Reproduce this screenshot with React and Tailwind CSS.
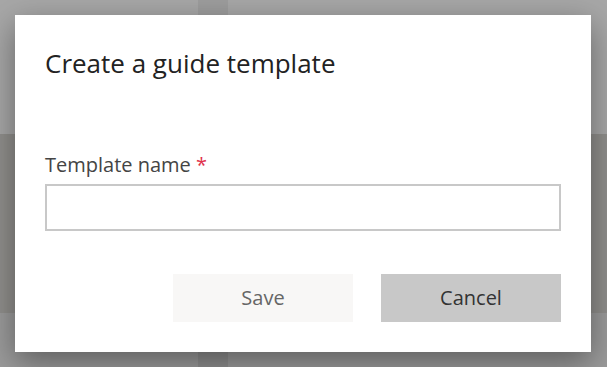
import React from 'react'

const App = () => {
  return (
    <div className="relative w-[607px] h-[367px] overflow-hidden bg-[#a7a7a7]" style={{ fontFamily: '"Open Sans", "Noto Sans", sans-serif' }}>
      {/* page behind the overlay */}
      <div className="absolute left-0 top-[134px] w-[607px] h-[179px] bg-[#908f8c]" />
      <div className="absolute left-0 top-[313px] w-[607px] h-[54px] bg-[#9b9b9b]" />
      <div className="absolute left-[198px] top-0 w-[30px] h-[134px] bg-[#9d9d9d]" />
      <div className="absolute left-[198px] top-[313px] w-[30px] h-[54px] bg-[#8f8f8f]" />

      {/* Dialog */}
      <div className="absolute left-[15px] top-[15px] w-[576px] h-[337px] bg-white shadow-[0_10px_30px_rgba(0,0,0,0.4)] px-[30px] flex flex-col">
        <h1 className="mt-[30px] text-[26px] leading-[36px] text-[#222]">Create a guide template</h1>

        <label className="mt-[71px] text-[20px] leading-[26px] text-[#444]">
          Template name <span className="text-[#e0324b]">*</span>
        </label>
        <input type="text" className="mt-[6px] h-[47px] w-full border-2 border-[#c8c8c8] outline-none px-2" />

        <div className="flex justify-end gap-[28px] mt-[43px]">
          <button className="w-[180px] h-[48px] bg-[#f8f7f6] text-[#666] text-[20px]">Save</button>
          <button className="w-[180px] h-[48px] bg-[#c8c8c8] text-[#333] text-[20px]">Cancel</button>
        </div>
      </div>
    </div>
  )
}

export default App
